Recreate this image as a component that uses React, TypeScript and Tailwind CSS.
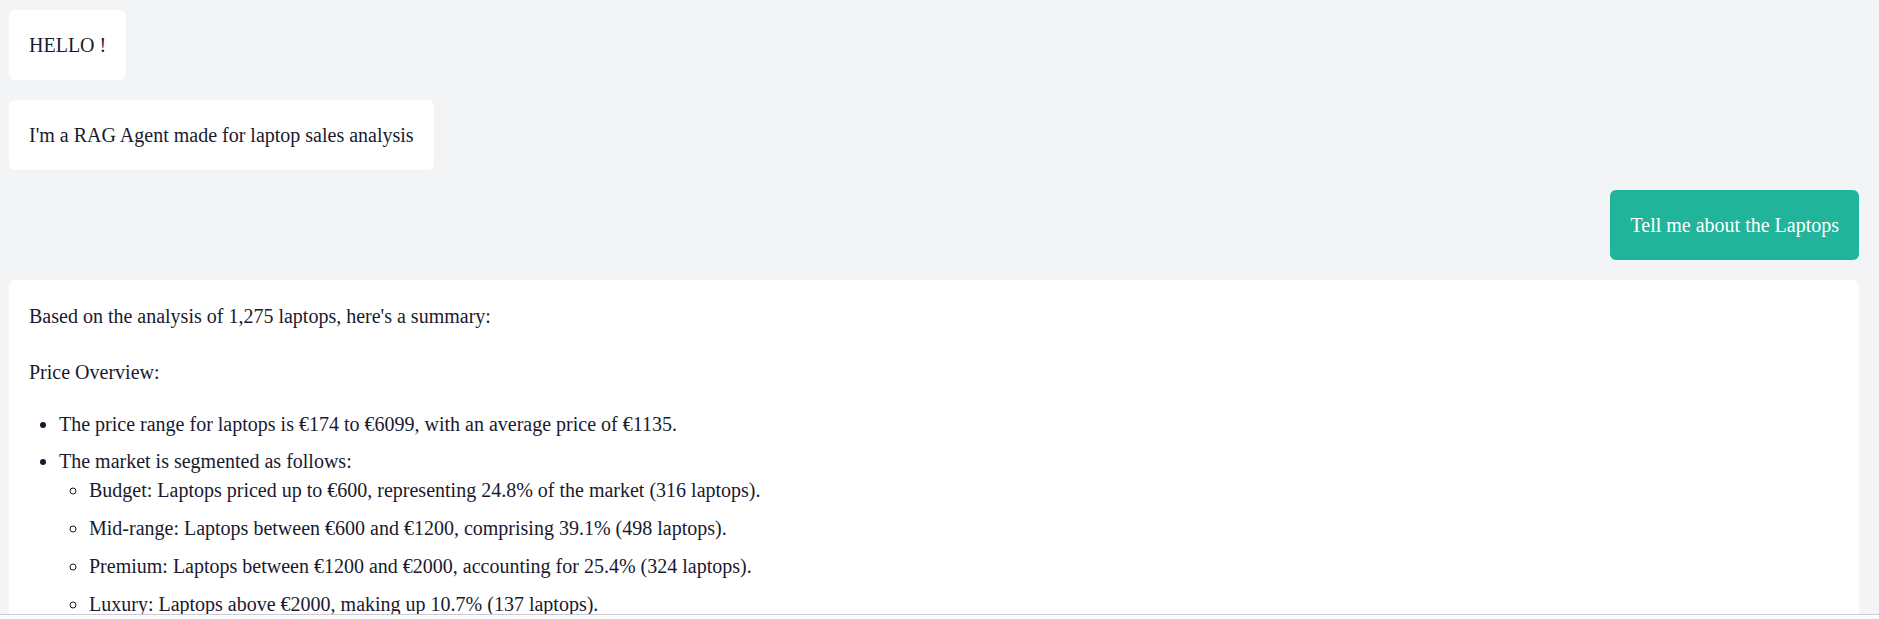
import React from "react";

export default function App() {
  return (
    <div
      className="h-screen w-full flex flex-col bg-[#f3f4f6] overflow-hidden text-[#1a1a2e]"
      style={{ fontFamily: '"Liberation Serif", "Times New Roman", serif' }}
    >
      <div className="flex-1 overflow-hidden pl-[9px] pr-[20px] pt-[10px] flex flex-col gap-[20px] text-[20px] leading-[28.8px]">
        <div className="self-start bg-white rounded-[6px] px-[20px] py-[20.6px]">HELLO !</div>
        <div className="self-start bg-white rounded-[6px] px-[20px] py-[20.6px]">
          I'm a RAG Agent made for laptop sales analysis
        </div>
        <div className="self-end bg-[#20b49a] text-white rounded-[6px] pl-[20px] pr-[20px] py-[20.6px]">
          Tell me about the Laptops
        </div>
        <div className="bg-white rounded-[6px] px-[20px] pt-[22.5px] pb-[20px] shrink-0">
          <p className="mb-[26.5px]">Based on the analysis of 1,275 laptops, here's a summary:</p>
          <p className="mb-[23px]">Price Overview:</p>
          <ul className="list-disc pl-[30px]">
            <li className="mb-[9px]">
              The price range for laptops is €174 to €6099, with an average price of €1135.
            </li>
            <li className="mb-[9px]">
              The market is segmented as follows:
              <ul className="list-[circle] pl-[30px]">
                <li className="mb-[9px]">
                  Budget: Laptops priced up to €600, representing 24.8% of the market (316 laptops).
                </li>
                <li className="mb-[9px]">
                  Mid-range: Laptops between €600 and €1200, comprising 39.1% (498 laptops).
                </li>
                <li className="mb-[9px]">
                  Premium: Laptops between €1200 and €2000, accounting for 25.4% (324 laptops).
                </li>
                <li className="mb-[9px]">
                  Luxury: Laptops above €2000, making up 10.7% (137 laptops).
                </li>
              </ul>
            </li>
          </ul>
        </div>
      </div>
      <div className="h-[5px] shrink-0 bg-white border-t border-[#c9cad2]" />
    </div>
  );
}
